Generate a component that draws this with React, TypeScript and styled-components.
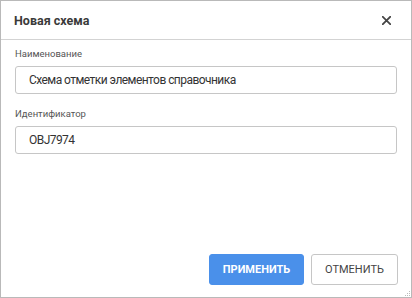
import React from "react";
import styled, { createGlobalStyle } from "styled-components";

const Global = createGlobalStyle`
  html, body { margin: 0; padding: 0; background: #ffffff; }
  * { box-sizing: border-box; }
`;

const Dialog = styled.div`
  position: relative;
  width: 412px;
  height: 298px;
  border: 1px solid #b9b9b9;
  background: #fff;
  display: flex;
  flex-direction: column;
  font-family: Roboto, "Liberation Sans", sans-serif;
  color: #333;
`;

const Header = styled.div`
  height: 39px;
  flex: none;
  display: flex;
  align-items: center;
  justify-content: space-between;
  padding: 0 20px 0 13px;
  border-bottom: 1px solid #d3d3d3;
`;

const Title = styled.div`
  font-size: 12.5px;
  font-weight: 700;
  letter-spacing: 0;
  color: #3a3a3a;
  margin-top: 1px;
`;

const CloseButton = styled.button`
  border: none;
  background: none;
  padding: 0;
  width: 9px;
  height: 9px;
  display: flex;
  align-items: center;
  justify-content: center;
  cursor: pointer;
`;

const Body = styled.div`
  flex: 1;
  display: flex;
  flex-direction: column;
  padding: 7px 14px 0 14px;
`;

const Field = styled.div`
  display: flex;
  flex-direction: column;
  & + & {
    margin-top: 13px;
  }
`;

const Label = styled.label`
  font-size: 9.5px;
  line-height: 14px;
  letter-spacing: 0;
  color: #555;
  margin-bottom: 5px;
`;

const Input = styled.input`
  height: 28px;
  width: 100%;
  border: 1px solid #c6c6c6;
  border-radius: 3px;
  padding: 0 13px;
  font-family: Roboto, "Liberation Sans", sans-serif;
  font-size: 12px;
  letter-spacing: -0.55px;
  color: #333;
  outline: none;
  background: #fff;
`;

const Footer = styled.div`
  flex: none;
  display: flex;
  justify-content: flex-end;
  gap: 7px;
  padding: 0 13px 12px 0;
`;

const Button = styled.button<{ $primary?: boolean }>`
  height: 31px;
  border-radius: 3px;
  font-family: Roboto, "Liberation Sans", sans-serif;
  font-size: 11px;
  font-weight: ${(p) => (p.$primary ? 700 : 400)};
  text-transform: uppercase;
  padding: 0;
  width: ${(p) => (p.$primary ? "95px" : "87px")};
  border: 1px solid ${(p) => (p.$primary ? "#4a90ea" : "#c6c6c6")};
  background: ${(p) => (p.$primary ? "#4a90ea" : "#fff")};
  color: ${(p) => (p.$primary ? "#fff" : "#444")};
  cursor: pointer;
`;

const Grip = styled.svg`
  position: absolute;
  right: 1px;
  bottom: 1px;
`;

export default function App() {
  return (
    <>
      <Global />
      <Dialog>
        <Header>
          <Title>Новая схема</Title>
          <CloseButton aria-label="close">
            <svg width="9" height="9" viewBox="0 0 9 9">
              <path d="M0.8 0.8L8.2 8.2M8.2 0.8L0.8 8.2" stroke="#444" strokeWidth="1.8" strokeLinecap="square" />
            </svg>
          </CloseButton>
        </Header>
        <Body>
          <Field>
            <Label>Наименование</Label>
            <Input defaultValue="Схема отметки элементов справочника" />
          </Field>
          <Field>
            <Label>Идентификатор</Label>
            <Input defaultValue="OBJ7974" />
          </Field>
        </Body>
        <Footer>
          <Button $primary>Применить</Button>
          <Button>Отменить</Button>
        </Footer>
        <Grip width="5" height="5" viewBox="0 0 5 5">
          <rect x="4" y="0" width="1" height="1" fill="#bbb" />
          <rect x="2" y="2" width="1" height="1" fill="#bbb" />
          <rect x="4" y="2" width="1" height="1" fill="#bbb" />
          <rect x="0" y="4" width="1" height="1" fill="#bbb" />
          <rect x="2" y="4" width="1" height="1" fill="#bbb" />
          <rect x="4" y="4" width="1" height="1" fill="#bbb" />
        </Grip>
      </Dialog>
    </>
  );
}
